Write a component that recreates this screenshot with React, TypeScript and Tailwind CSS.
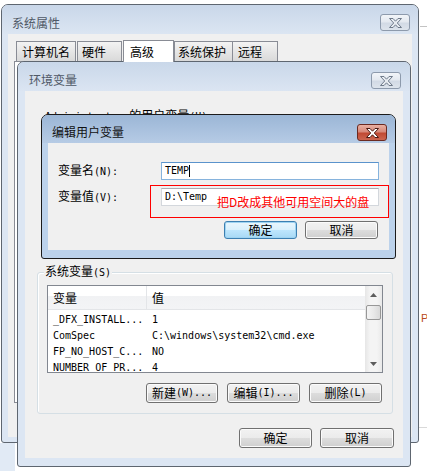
import React from "react";

const monoCls = "font-['DejaVu_Sans_Mono','Liberation_Mono',monospace] text-[10px] whitespace-pre";

// CJK runs at 12px, ASCII runs in a 6px-wide mono, like SimSun
function T({ s }: { s: string }) {
  const parts = s.split(/([\x20-\x7e]+)/).filter(Boolean);
  return (
    <>
      {parts.map((p, i) =>
        /^[\x20-\x7e]+$/.test(p) ? (
          <span key={i} className={monoCls}>
            {p}
          </span>
        ) : (
          <span key={i}>{p}</span>
        )
      )}
    </>
  );
}

function CloseBtn({ active, className }: { active?: boolean; className: string }) {
  return (
    <div
      className={`flex h-[17px] w-[30px] shrink-0 items-center justify-center rounded-[3px] border ${
        active
          ? "border-[#6b2a21] bg-[linear-gradient(#e9b0a2_0%,#d7897a_45%,#c14a33_55%,#cc6650_100%)]"
          : "border-[#8d9aac] bg-[linear-gradient(#f2f5f9_0%,#e4e9f0_45%,#d2dae5_55%,#dde4ec_100%)]"
      } ${className}`}
    >
      <svg width="13" height="10" viewBox="0 0 13 10">
        <path
          d="M0.5 0.5H4L6.5 3.2L9 0.5H12.5L8.3 5L12.5 9.5H9L6.5 6.8L4 9.5H0.5L4.7 5Z"
          fill={active ? "#ffffff" : "#e8ecf1"}
          stroke={active ? "#4a1a12" : "#6f7b8b"}
          strokeWidth="1"
          strokeLinejoin="round"
        />
      </svg>
    </div>
  );
}

function Button({ label, primary, className }: { label: string; primary?: boolean; className: string }) {
  return (
    <div
      className={`flex items-center justify-center rounded-[3px] border text-black ${
        primary
          ? "border-[#3c7fb1] bg-[linear-gradient(#eaf6fd_0%,#d9f0fc_50%,#bee6fd_50%,#a7d9f5_100%)] shadow-[inset_0_0_0_1px_#9fd4f2]"
          : "border-[#707070] bg-[linear-gradient(#f2f2f2_0%,#ebebeb_50%,#dddddd_50%,#cfcfcf_100%)] shadow-[inset_0_0_0_1px_#fbfbfb]"
      } ${className}`}
    >
      <T s={label} />
    </div>
  );
}

const rows = [
  ["_DFX_INSTALL...", "1"],
  ["ComSpec", "C:\\windows\\system32\\cmd.exe"],
  ["FP_NO_HOST_C...", "NO"],
  ["NUMBER_OF_PR...", "4"],
];

export default function App() {
  return (
    <div className="relative h-[471px] w-[427px] overflow-hidden bg-white font-['Noto_Sans_CJK_SC',sans-serif] text-[12px] leading-[14px] text-black">
      {/* desktop behind the windows */}
      <div className="absolute left-0 top-[443px] h-[28px] w-[15px] bg-[#e1eaf5]" />
      <div className="absolute left-[420px] top-[26px] h-px w-[7px] bg-[#c3c3c3]" />
      <div className="absolute left-[419px] top-[427px] h-px w-[8px] bg-[#d9d9d9]" />
      <div className="absolute left-[421px] top-[311px] font-['Liberation_Sans',sans-serif] text-[11px] text-[#b84a1c]">P</div>

      {/* 系统属性 */}
      <div className="absolute left-[1px] top-[4px] flex h-[439px] w-[418px] flex-col rounded-t-[7px] rounded-b-[3px] border border-[#5e6670] bg-[#dce6f3]">
        <div className="flex h-[29px] shrink-0 items-start justify-between rounded-t-[6px] bg-[linear-gradient(#c9d7e9,#dbe5f2)]">
          <span className="ml-[10px] mt-[11px] text-[#4f5866]">系统属性</span>
          <CloseBtn className="mr-[8px] mt-[9px]" />
        </div>
        <div className="mx-[6px] mb-[5px] flex flex-1 flex-col bg-[#f0f0f0]">
          <div className="ml-[8px] mt-[6px] flex h-[21px] items-end">
            <div className="flex h-[20px] w-[60px] items-center border border-b-0 border-[#898c95] bg-[linear-gradient(#f3f3f3,#e6e6e6_50%,#d9d9d9)] pl-[5px]">计算机名</div>
            <div className="ml-px flex h-[20px] w-[45px] items-center border border-b-0 border-[#898c95] bg-[linear-gradient(#f3f3f3,#e6e6e6_50%,#d9d9d9)] pl-[4px]">硬件</div>
            <div className="relative z-10 -mb-px ml-px flex h-[22px] w-[51px] items-center border border-b-0 border-[#898c95] bg-white pl-[6px]">高级</div>
            <div className="flex h-[20px] w-[59px] items-center border border-b-0 border-[#898c95] bg-[linear-gradient(#f3f3f3,#e6e6e6_50%,#d9d9d9)] pl-[3px]">系统保护</div>
            <div className="-ml-px flex h-[20px] w-[46px] items-center border border-b-0 border-[#898c95] bg-[linear-gradient(#f3f3f3,#e6e6e6_50%,#d9d9d9)] pl-[5px]">远程</div>
          </div>
          <div className="ml-[6px] mr-[6px] h-[342px] border border-[#898c95] bg-white" />
        </div>
      </div>

      {/* 环境变量 */}
      <div className="absolute left-[17px] top-[61px] flex h-[406px] w-[394px] flex-col rounded-t-[7px] rounded-b-[3px] border border-[#5e6670] bg-[#dce6f3]">
        <div className="flex h-[29px] shrink-0 items-start justify-between rounded-t-[6px] bg-[linear-gradient(#c9d7e9,#dbe5f2)]">
          <span className="ml-[11px] mt-[11px] text-[#4f5866]">环境变量</span>
          <CloseBtn className="mr-[9px] mt-[10px]" />
        </div>
        <div className="mx-[7px] mb-[8px] flex flex-1 flex-col bg-[#f0f0f0]">
          <div className="h-[181px] shrink-0 pl-[20px] pt-[17px]">
            <T s="Administrator 的用户变量(U)" />
          </div>

          <div className="relative ml-[12px] h-[142px] w-[356px] shrink-0 rounded-[3px] border border-[#d5dfe5] shadow-[inset_1px_1px_0_#ffffff]">
            <span className="absolute left-[6px] top-[-9px] bg-[#f0f0f0] px-px">
              <T s="系统变量(S)" />
            </span>
            <div className="ml-[9px] mt-[12px] flex h-[88px] w-[336px] overflow-hidden border border-[#828790] bg-white">
              <div className="flex flex-1 flex-col overflow-hidden">
                <div className="flex h-[24px] shrink-0 border-b border-[#e3e5e8] bg-[linear-gradient(#ffffff_0%,#ffffff_45%,#f1f2f4_45%,#f3f4f6_100%)]">
                  <div className="flex w-[99px] items-center border-r border-[#e3e5e8] pl-[5px]">变量</div>
                  <div className="flex items-center pl-[5px]">值</div>
                </div>
                <div className="flex flex-col pt-[2px]">
                  {rows.map(([k, v]) => (
                    <div key={k} className="flex h-[16px] shrink-0 items-center">
                      <div className={`w-[99px] pl-[5px] ${monoCls}`}>{k}</div>
                      <div className={`pl-[5px] ${monoCls}`}>{v}</div>
                    </div>
                  ))}
                </div>
              </div>
              <div className="flex w-[17px] shrink-0 flex-col bg-[linear-gradient(90deg,#e6e6e6,#f4f4f4_30%,#f4f4f4_70%,#e9e9e9)]">
                <div className="flex h-[17px] items-center justify-center">
                  <svg width="7" height="4" viewBox="0 0 7 4">
                    <path d="M0 4L3.5 0L7 4Z" fill="#5d5d5d" />
                  </svg>
                </div>
                <div className="mx-[1px] mt-[2px] h-[15px] rounded-[2px] border border-[#979797] bg-[linear-gradient(90deg,#f4f4f4,#e9e9e9_50%,#d9d9d9)]" />
                <div className="flex-1" />
                <div className="flex h-[17px] items-center justify-center">
                  <svg width="7" height="4" viewBox="0 0 7 4">
                    <path d="M0 0L3.5 4L7 0Z" fill="#5d5d5d" />
                  </svg>
                </div>
              </div>
            </div>
            <div className="mr-[10px] mt-[10px] flex justify-end gap-[9px]">
              <Button label="新建(W)..." className="h-[20px] w-[72px]" />
              <Button label="编辑(I)..." className="h-[20px] w-[73px]" />
              <Button label="删除(L)" className="h-[20px] w-[73px]" />
            </div>
          </div>

          <div className="mr-[9px] mt-[14px] flex justify-end gap-[8px]">
            <Button label="确定" className="h-[20px] w-[73px]" />
            <Button label="取消" className="h-[20px] w-[74px]" />
          </div>
        </div>
      </div>

      {/* 编辑用户变量 */}
      <div className="absolute left-[41px] top-[114px] flex h-[145px] w-[355px] flex-col rounded-t-[7px] rounded-b-[3px] border border-[#1b1b1b] bg-[#bcd2eb]">
        <div className="flex h-[28px] shrink-0 items-start justify-between rounded-t-[6px] bg-[linear-gradient(#9bb6d6,#b6cbe5)]">
          <span className="ml-[10px] mt-[10px] text-[#111]">编辑用户变量</span>
          <CloseBtn active className="mr-[8px] mt-[9px]" />
        </div>
        <div className="relative mx-[6px] mb-[8px] flex flex-1 flex-col bg-[#f0f0f0] pt-[19px]">
          <div className="flex h-[18px] items-center">
            <div className="w-[113px] pl-[10px]">
              <T s="变量名(N):" />
            </div>
            <div className="flex h-[18px] w-[218px] items-center border border-[#86b3dd] border-t-[#5a93cc] bg-white pl-[3px]">
              <span className={monoCls}>TEMP</span>
              <span className="h-[12px] w-px bg-black" />
            </div>
          </div>
          <div className="mt-[8px] flex h-[18px] items-center">
            <div className="w-[113px] pl-[10px]">
              <T s="变量值(V):" />
            </div>
            <div className="flex h-[18px] w-[218px] items-center border border-[#d3d7dc] border-t-[#abadb3] bg-white pl-[3px]">
              <span className={monoCls}>D:\Temp</span>
            </div>
          </div>
          <div className="mr-[11px] mt-[15px] flex justify-end gap-[8px]">
            <Button primary label="确定" className="h-[18px] w-[73px]" />
            <Button label="取消" className="h-[18px] w-[73px]" />
          </div>

          {/* annotation */}
          <div className="absolute left-[102px] top-[42px] h-[33px] w-[239px] border border-[#ff0000]" />
          <span className="absolute left-[169px] top-[52px] text-[#ff0000]">把D改成其他可用空间大的盘</span>
        </div>
      </div>
    </div>
  );
}
